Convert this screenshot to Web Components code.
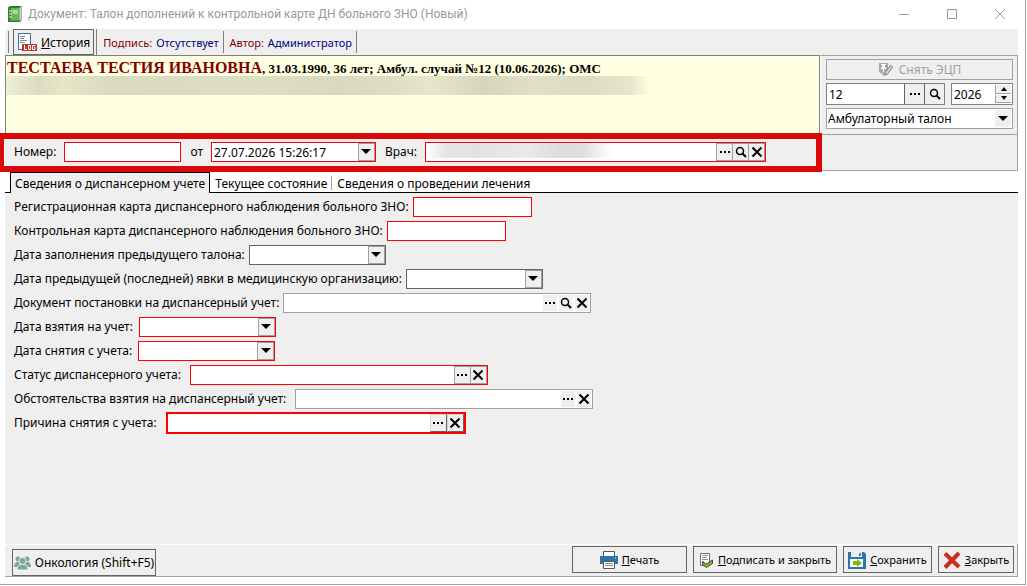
<!DOCTYPE html>
<html lang="ru">
<head>
<meta charset="utf-8">
<title>Талон дополнений к контрольной карте</title>
<style>
    body {
        margin: 0;
        background: #fff;
        font-family: "Noto Sans", "Open Sans", sans-serif;
        font-size: 12px;
        color: #000;
    }
</style>
</head>
<body>
<app-window caption="Документ: Талон дополнений к контрольной карте ДН больного ЗНО (Новый)">
    <tool-bar slot="toolbar">
        <action-button icon="log" hotkey="И" text="стория" kind="tool"></action-button>
        <status-note name="Подпись:" value="Отсутствует"></status-note>
        <status-note name="Автор:" value="Администратор"></status-note>
    </tool-bar>

    <patient-card slot="patient" name="ТЕСТАЕВА ТЕСТИЯ ИВАНОВНА">, 31.03.1990, 36 лет; Амбул. случай №12 (10.06.2026); ОМС</patient-card>

    <case-panel slot="case"></case-panel>

    <head-row slot="head">
        <form-field label="Номер:" tone="required" style="--w: 117px"></form-field>
        <form-field label="от" tone="required" value="27.07.2026 15:26:17" buttons="drop" style="--w: 165px"></form-field>
        <form-field label="Врач:" tone="required" buttons="more find clear" masked style="--w: 341px"></form-field>
    </head-row>

    <tab-strip slot="tabs">
        <tab-item active>Сведения о диспансерном учете</tab-item>
        <tab-item>Текущее состояние</tab-item>
        <tab-item>Сведения о проведении лечения</tab-item>
    </tab-strip>

    <form-field label="Регистрационная карта диспансерного наблюдения больного ЗНО:" tone="required" style="--w: 119px; --gap: 4px"></form-field>
    <form-field label="Контрольная карта диспансерного наблюдения больного ЗНО:" tone="required" style="--w: 119px; --gap: 4px"></form-field>
    <form-field label="Дата заполнения предыдущего талона:" buttons="drop" style="--w: 137px; --gap: 4px"></form-field>
    <form-field label="Дата предыдущей (последней) явки в медицинскую организацию:" buttons="drop" style="--w: 137px; --gap: 4px"></form-field>
    <form-field label="Документ постановки на диспансерный учет:" tone="muted" buttons="more find clear" style="--w: 308px; --gap: 4px"></form-field>
    <form-field label="Дата взятия на учет:" tone="required" buttons="drop" style="--w: 137px; --gap: 6px"></form-field>
    <form-field label="Дата снятия с учета:" tone="required" buttons="drop" style="--w: 137px; --gap: 6px"></form-field>
    <form-field label="Статус диспансерного учета:" tone="required" buttons="more clear" style="--w: 298px"></form-field>
    <form-field label="Обстоятельства взятия на диспансерный учет:" tone="muted" buttons="more clear" style="--w: 298px"></form-field>
    <form-field label="Причина снятия с учета:" tone="focused" buttons="more clear" style="--w: 300px"></form-field>

    <bottom-bar slot="footer">
        <action-button slot="left" icon="people" text="Онкология (Shift+F5)" kind="tag" style="--w: 144px"></action-button>
        <action-button icon="printer" hotkey="П" text="ечать" style="--w: 115px"></action-button>
        <action-button icon="sign" hotkey="П" text="одписать и закрыть" style="--w: 144px"></action-button>
        <action-button icon="save" hotkey="С" text="охранить" style="--w: 89px"></action-button>
        <action-button icon="cross" hotkey="З" text="акрыть" style="--w: 76px"></action-button>
    </bottom-bar>
</app-window>

<script>
const ICONS = {
    book: `<svg width="16" height="18" viewBox="0 0 16 18">
        <path d="M1 2.500 3 1h11.500v14L13 17H1z" fill="#2f7d2c"/>
        <path d="M2 3h10.500v12.500H2z" fill="#6db45a"/><path d="M12.500 3 14 1.500v13L12.500 16z" fill="#c9dcc2"/>
        <path d="M2 3h2v12.500H2z" fill="#3b8a35"/><path d="M5.500 5h5.500v4H5.500z" fill="#a5db90"/>
        <path d="M2 6h3M2 9h3M2 12h3" stroke="#e2f4dc"/></svg>`,
    log: `<svg width="20" height="20" viewBox="0 0 20 20">
        <path d="M1 1.500h12.500V13M1.500 1v16.500H5" fill="none" stroke="#3573a5"/>
        <path d="M2 2h11v10H6v5H2z" fill="#fff"/>
        <path d="M3 4.500h5M3 6.500h4M3 8.500h7M3 10.500h5" stroke="#8b8b8b"/>
        <path d="M5 12h15v7H5z" fill="#b8382b"/>
        <path d="M7.500 13v4.500H10M11.500 13.500h2v4h-2zM18.500 13.500h-3v4h2.500v-2h-1" fill="none" stroke="#fff"/></svg>`,
    pen: `<svg width="16" height="15" viewBox="0 0 16 15">
        <path d="M1 1h9v9H1z" fill="#a8a8a8"/>
        <path d="M3 2h5v1H7v2l1 1v1H6v3H5V7H3V6l1-1V3H3z" fill="#fff"/>
        <path d="m1 10 5 4 3-1 6-8-3-2-5 7z" fill="#b4b4b4"/>
        <path d="m6.500 13 1-3 5-6.500 2 1.500-5 7z" fill="#d8d8d8" stroke="#808080"/></svg>`,
    people: `<svg width="17" height="14" viewBox="0 0 17 14" fill="#7aa898">
        <circle cx="4" cy="3" r="2.500"/><circle cx="13" cy="3" r="2.500"/>
        <path d="M0 11c0-4 2-5 4-5h9c2 0 4 1 4 5z"/>
        <circle cx="8.500" cy="5" r="3.500" stroke="#efefef"/>
        <path d="M3 14c0-4 2-5.500 5.500-5.500S14 10 14 14z" stroke="#efefef"/></svg>`,
    printer: `<svg width="18" height="18" viewBox="0 0 18 18">
        <path d="M3.500.5h11V6h-11z" fill="#fff" stroke="#555"/>
        <path d="M0 5h18v8h-3v-2H3v2H0z" fill="#2e74a8"/><path d="M15 7h1" stroke="#fff"/>
        <path d="M3.500 10.500h11v7h-11z" fill="#fff" stroke="#555"/>
        <path d="M5 12.500h8M5 14.500h8" stroke="#888"/></svg>`,
    sign: `<svg width="15" height="16" viewBox="0 0 15 16">
        <path d="M1.500 1.500h9v12h-9z" fill="#fff" stroke="#68727d"/>
        <path d="M3 3.500h6M3 5.500h5M3 7.500h6M3 9.500h2" stroke="#8b949c"/>
        <path d="m3.500 10 3.500 2 6.500-4v3.500L7.500 15.500l-4-3z" fill="#8fae3a" stroke="#3d4f1d"/></svg>`,
    save: `<svg width="18" height="18" viewBox="0 0 18 18">
        <path d="M0 1h16l2 2v15H0z" fill="#2e74a8"/>
        <path d="M3 1h11v5H3z" fill="#e9eef2"/><path d="M11 2h2v3h-2z" fill="#6b7c88"/>
        <path d="M2 8h13v8H2z" fill="#fff"/><path d="M5 10h4V8l5 4-5 4v-2H5z" fill="#7db70f"/></svg>`,
    cross: `<svg width="18" height="18" viewBox="0 0 18 18">
        <path d="M2 2.500 16 16M16 2 2 16.500" stroke="#cb2c1d" stroke-width="4"/></svg>`,
    more: `<svg width="12" height="12" viewBox="0 0 12 12"><path d="M1 5h2v2H1zM5 5h2v2H5zM9 5h2v2H9z"/></svg>`,
    find: `<svg width="12" height="12" viewBox="0 0 12 12" fill="none" stroke="#000">
        <circle cx="5" cy="5" r="3.500" stroke-width="1.500"/><path d="m7.500 7.500 3.500 3.500" stroke-width="2"/></svg>`,
    clear: `<svg width="12" height="12" viewBox="0 0 12 12"><path d="m1.500 1.500 9 9M10.500 1.500l-9 9" stroke="#000" stroke-width="2"/></svg>`,
    drop: `<svg width="10" height="6" viewBox="0 0 10 6"><path d="M0 0h10L5 5z"/></svg>`,
    up: `<svg width="6" height="4" viewBox="0 0 6 4"><path d="M0 4h6L3 0z"/></svg>`,
    down: `<svg width="6" height="4" viewBox="0 0 6 4"><path d="M0 0h6L3 4z"/></svg>`
};

const HINTS = { more: 'Выбрать', find: 'Найти', clear: 'Очистить', drop: 'Открыть' };

function render(el, html) {
    el.attachShadow({ mode: 'open' }).innerHTML = html;
}

class AppWindow extends HTMLElement {
    connectedCallback() {
        render(this, `
            <style>
                :host {
                    display: flex;
                    flex-direction: column;
                    box-sizing: border-box;
                    min-height: calc(100vh - 1px);
                    margin-right: 1px;
                    padding: 0 7px 7px 5px;
                    border: solid #a0a0a0;
                    border-width: 0 1px 1px 0;
                }
                header {
                    display: flex;
                    align-items: center;
                    height: 29px;
                    padding: 0 12px 2px 2px;
                    box-sizing: border-box;
                    color: #999;
                }
                h1 {
                    flex: 1;
                    margin: 0 0 0 5px;
                    font: 12px Roboto, "Open Sans", sans-serif;
                }
                .controls { display: flex; gap: 36px; }
                .controls button {
                    width: 12px;
                    height: 12px;
                    padding: 0;
                    border: 0;
                    background: none;
                }
                .controls svg, header > svg { display: block; }
                .top { display: grid; grid-template-columns: 1fr 198px; }
                .filler { border: solid #a0a0a0; border-width: 0 1px 1px 0; background: #efefef; }
                .form {
                    flex: 1;
                    display: flex;
                    flex-direction: column;
                    padding: 2px 9px;
                    background: #efefef;
                }
            </style>
            <header>
                ${ICONS.book}
                <h1>${this.getAttribute('caption')}</h1>
                <div class="controls">
                    <button aria-label="Свернуть"><svg width="12" height="12"><path d="M1 6.500h10" stroke="#999"/></svg></button>
                    <button aria-label="Развернуть"><svg width="12" height="12"><path d="M1.500 1.500h9v9h-9z" fill="none" stroke="#999"/></svg></button>
                    <button aria-label="Закрыть"><svg width="12" height="12"><path d="m1 1 10 10M11 1 1 11" stroke="#999"/></svg></button>
                </div>
            </header>
            <slot name="toolbar"></slot>
            <div class="top">
                <slot name="patient"></slot>
                <slot name="case"></slot>
                <slot name="head"></slot>
                <div class="filler"></div>
            </div>
            <slot name="tabs"></slot>
            <main class="form"><slot></slot></main>
            <slot name="footer"></slot>
        `);
    }
}

class ToolBar extends HTMLElement {
    connectedCallback() {
        render(this, `
            <style>
                :host {
                    display: flex;
                    height: 26px;
                    padding-left: 3px;
                    background: #efefef;
                }
                .grip { width: 1px; margin: 2px 4px 2px 0; background: #808080; }
            </style>
            <span class="grip"></span>
            <slot></slot>
        `);
    }
}

class StatusNote extends HTMLElement {
    connectedCallback() {
        render(this, `
            <style>
                :host {
                    display: flex;
                    align-items: center;
                    gap: 4px;
                    margin: 2px 0;
                    padding: 0 4px 0 6px;
                    border-right: 1px solid #808080;
                    font-size: 11px;
                }
                .name { color: #800000; }
                .value { color: #000080; }
            </style>
            <span class="name">${this.getAttribute('name')}</span>
            <span class="value">${this.getAttribute('value')}</span>
        `);
    }
}

class ActionButton extends HTMLElement {
    connectedCallback() {
        const hotkey = this.getAttribute('hotkey');
        render(this, `
            <style>
                :host { display: block; font-size: 11px; }
                button {
                    display: flex;
                    align-items: center;
                    justify-content: center;
                    gap: 4px;
                    box-sizing: border-box;
                    width: var(--w, auto);
                    height: 27px;
                    padding: 0;
                    border: 1px solid #646464;
                    background: #efefef;
                    font: inherit;
                    color: inherit;
                    white-space: nowrap;
                }
                :host([kind]) { font-size: 12px; }
                :host([kind="tool"]) { border-right: 1px solid #808080; padding-right: 2px; }
                :host([kind="tool"]) button { height: 26px; padding: 0 3px; }
                svg { flex: none; }
            </style>
            <button type="button">
                ${ICONS[this.getAttribute('icon')]}
                <span>${hotkey ? `<u>${hotkey}</u>` : ''}${this.getAttribute('text')}</span>
            </button>
        `);
    }
}

class PatientCard extends HTMLElement {
    connectedCallback() {
        render(this, `
            <style>
                :host {
                    display: block;
                    box-sizing: border-box;
                    height: 79px;
                    padding: 3px 1px;
                    border: solid #808080;
                    border-width: 1px 1px 0 1px;
                    background: #ffffe1;
                    font: bold 13px "Liberation Serif", serif;
                }
                .line { height: 17px; line-height: 17px; white-space: nowrap; }
                .name { font-size: 16px; color: #800000; }
                .hidden {
                    width: 644px;
                    height: 19px;
                    margin-left: -1px;
                    background: linear-gradient(90deg, #efefd3, #dcdcc4 5%, #e6e6c8 9%, #dadac2 16%, #dedec4 40%,
                        #d9d9c0 52%, #dedec4 60%, #e6e6ca 66%, #d6d6be 74%, #e0e0c6 82%, #dcdcc2 90%, #e6e6ca 97%, #ffffe1);
                }
            </style>
            <div class="line"><span class="name">${this.getAttribute('name')}</span><slot></slot></div>
            <div class="hidden"></div>
        `);
    }
}

class CasePanel extends HTMLElement {
    connectedCallback() {
        render(this, `
            <style>
                :host {
                    display: flex;
                    flex-direction: column;
                    gap: 3px;
                    box-sizing: border-box;
                    padding: 3px 4px 5px 5px;
                    border: solid #a0a0a0;
                    border-width: 1px;
                    border-left-color: #fff;
                    background: #efefef;
                }
                button, input, select {
                    box-sizing: border-box;
                    margin: 0;
                    padding: 0;
                    border: 0;
                    font: inherit;
                    color: #000;
                }
                button { display: flex; align-items: center; justify-content: center; background: #efefef; }
                .sign { gap: 5px; height: 21px; border: 1px solid #a0a0a0; color: #a0a0a0; }
                .row { display: flex; gap: 6px; }
                .box {
                    display: flex;
                    height: 22px;
                    box-sizing: border-box;
                    border: 1px solid #808080;
                    background: #fff;
                }
                .number { flex: 1; min-width: 0; }
                .year { flex: none; width: 62px; }
                .box input { flex: 1; min-width: 0; padding-left: 2px; background: none; }
                .number button { flex: none; width: 20px; border-left: 1px solid #646464; }
                .spin { display: flex; flex-direction: column; width: 16px; padding: 1px; gap: 1px; }
                .spin button { flex: 1; border: solid #a0a0a0; border-width: 0 0 1px 1px; }
                .kind { display: grid; grid-template-columns: 1fr 18px; height: 21px; border: 1px solid #a0a0a0; background: #fff; box-sizing: border-box; }
                .kind select { grid-area: 1 / 1 / 2 / 3; appearance: none; padding-left: 1px; background: none; }
                .kind span {
                    grid-area: 1 / 2;
                    display: grid;
                    place-items: center;
                    margin: 1px;
                    background: #efefef;
                    pointer-events: none;
                }
            </style>
            <button class="sign" type="button" disabled>${ICONS.pen}Снять ЭЦП</button>
            <div class="row">
                <div class="box number">
                    <input aria-label="Номер случая" value="12">
                    <button type="button" aria-label="Выбрать">${ICONS.more}</button>
                    <button type="button" aria-label="Найти">${ICONS.find}</button>
                </div>
                <div class="box year">
                    <input aria-label="Год" value="2026">
                    <div class="spin">
                        <button type="button" aria-label="Больше">${ICONS.up}</button>
                        <button type="button" aria-label="Меньше">${ICONS.down}</button>
                    </div>
                </div>
            </div>
            <div class="kind">
                <select aria-label="Вид талона"><option>Амбулаторный талон</option></select>
                <span>${ICONS.drop}</span>
            </div>
        `);
    }
}

class HeadRow extends HTMLElement {
    connectedCallback() {
        render(this, `
            <style>
                :host {
                    --gap: 8px;
                    position: relative;
                    display: flex;
                    align-items: flex-start;
                    gap: 9px;
                    box-sizing: border-box;
                    height: 36px;
                    padding: 5px 9px 0;
                    background: #efefef;
                }
                /* red attention frame, drawn over the neighbouring panels */
                .frame {
                    position: absolute;
                    inset: -2px -2px -1px -5px;
                    border: 6px solid #da0808;
                    border-left-width: 4px;
                    pointer-events: none;
                }
            </style>
            <slot></slot>
            <div class="frame"></div>
        `);
    }
}

class TabStrip extends HTMLElement {
    connectedCallback() {
        render(this, `
            <style>
                :host {
                    display: flex;
                    height: 22px;
                    padding: 1px 0 0 5px;
                    box-sizing: border-box;
                    background: linear-gradient(#000, #000) bottom / 100% 1px no-repeat #fff;
                }
            </style>
            <slot></slot>
        `);
    }
}

class TabItem extends HTMLElement {
    connectedCallback() {
        render(this, `
            <style>
                :host { display: flex; }
                button {
                    padding: 2px 5px 0;
                    border: 0;
                    background: linear-gradient(#a0a0a0, #a0a0a0) right center / 1px 14px no-repeat;
                    font: inherit;
                    color: inherit;
                    white-space: nowrap;
                }
                :host(:last-of-type) button { background: none; }
                :host([active]) button {
                    padding: 1px 4px 0;
                    border: solid #000;
                    border-width: 1px 1px 0 1px;
                    background: #efefef;
                }
            </style>
            <button type="button" role="tab" aria-selected="${this.hasAttribute('active')}"><slot></slot></button>
        `);
    }
}

class FormField extends HTMLElement {
    connectedCallback() {
        const buttons = (this.getAttribute('buttons') || '').split(' ').filter(Boolean);
        render(this, `
            <style>
                :host {
                    --line: #646464;
                    display: flex;
                    align-items: center;
                    gap: var(--gap, 9px);
                    height: 24px;
                }
                label { white-space: nowrap; padding-bottom: 2px; }
                .box {
                    display: flex;
                    box-sizing: border-box;
                    width: var(--w);
                    height: 20px;
                    border: 1px solid var(--line);
                    background: #fff;
                }
                input {
                    flex: 1;
                    min-width: 0;
                    padding: 0 0 0 2px;
                    border: 0;
                    background: none;
                    font: inherit;
                    color: inherit;
                }
                button {
                    display: grid;
                    place-items: center;
                    box-sizing: border-box;
                    width: 17px;
                    margin: 0 0 0 -1px;
                    padding: 0;
                    border: 1px solid #a0a0a0;
                    background: #efefef;
                }
                :host([tone="required"]) { --line: #f00; }
                :host([tone="muted"]) { --line: #a0a0a0; }
                :host([tone="muted"]) button { width: 14px; margin: 1px; border: 0; }
                :host([tone="focused"]) { --line: #f00; }
                :host([tone="focused"]) .box { height: 22px; border-width: 2px; }
                :host([tone="focused"]) button {
                    margin: 0;
                    border-color: #d8d8d8 #646464 #646464 #d8d8d8;
                }
                :host([masked]) input {
                    background: linear-gradient(90deg, #fff, #e4e4e4 7%, #e2e2e2 18%, #eaeaea 35%, #dcdcdc 46%, #dedede 54%, #fff 64%) 0 0 / 100% 15px no-repeat;
                }
            </style>
            <label for="field">${this.getAttribute('label')}</label>
            <div class="box">
                <input id="field" value="${this.getAttribute('value') || ''}">
                ${buttons.map(b => `<button type="button" aria-label="${HINTS[b]}">${ICONS[b]}</button>`).join('')}
            </div>
        `);
    }
}

class BottomBar extends HTMLElement {
    connectedCallback() {
        render(this, `
            <style>
                :host {
                    display: flex;
                    align-items: flex-start;
                    gap: 6px;
                    height: 30px;
                    padding: 2px 3px 0 7px;
                    border: solid #a0a0a0;
                    border-width: 0 1px 1px 0;
                    background: #efefef;
                    box-shadow: inset 0 1px #fff;
                }
                .left { flex: 1; display: flex; align-self: flex-end; }
            </style>
            <div class="left"><slot name="left"></slot></div>
            <slot></slot>
        `);
    }
}

customElements.define('app-window', AppWindow);
customElements.define('tool-bar', ToolBar);
customElements.define('status-note', StatusNote);
customElements.define('action-button', ActionButton);
customElements.define('patient-card', PatientCard);
customElements.define('case-panel', CasePanel);
customElements.define('head-row', HeadRow);
customElements.define('tab-strip', TabStrip);
customElements.define('tab-item', TabItem);
customElements.define('form-field', FormField);
customElements.define('bottom-bar', BottomBar);
</script>
</body>
</html>
